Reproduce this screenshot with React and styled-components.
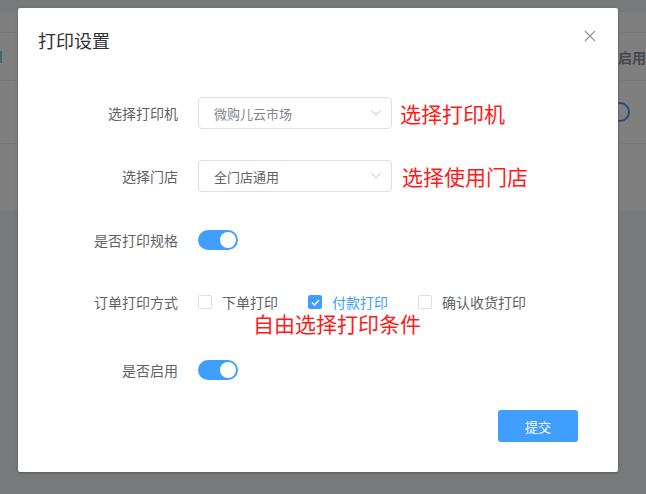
import React from 'react';
import styled, { createGlobalStyle } from 'styled-components';

const GlobalStyle = createGlobalStyle`
  html, body {
    margin: 0;
    padding: 0;
    width: 646px;
    height: 494px;
    overflow: hidden;
    background: #f0f2f5;
    font-family: "Noto Sans CJK SC", "Noto Sans", sans-serif;
  }
  * { box-sizing: border-box; }
`;

const Page = styled.div`
  position: relative;
  width: 646px;
  height: 494px;
  padding-top: 12px;
  overflow: hidden;
`;

const TableCard = styled.div`
  background: #fff;
  height: 198px;
`;

const TableRow = styled.div`
  display: flex;
  align-items: center;
  justify-content: space-between;
  height: ${p => p.h}px;
  border-bottom: 1px solid #ebeef5;
`;

const Mark = styled.span`
  width: 2px;
  height: 12px;
  background: #7fd4d0;
`;

const HeadCell = styled.span`
  font-size: 14px;
  font-weight: 700;
  color: #909399;
  white-space: nowrap;
`;

const Ring = styled.span`
  width: 20px;
  height: 20px;
  border: 2px solid #409eff;
  border-radius: 50%;
  margin-right: 16px;
`;

const Overlay = styled.div`
  position: absolute;
  inset: 0;
  background: rgba(0, 0, 0, 0.5);
  padding: 8px 0 0 18px;
`;

const Dialog = styled.div`
  width: 600px;
  height: 464px;
  background: #fff;
  border-radius: 2px;
  box-shadow: 0 1px 3px rgba(0, 0, 0, 0.3);
  display: flex;
  flex-direction: column;
`;

const DialogHeader = styled.div`
  display: flex;
  align-items: center;
  justify-content: space-between;
  padding: 20px 20px 10px;
`;

const Title = styled.span`
  font-size: 18px;
  line-height: 24px;
  color: #303133;
`;

const Close = styled.span`
  display: flex;
  margin-top: -8px;
  margin-right: 2px;
`;

const Body = styled.div`
  padding: 35px 20px 0;
  flex: 1;
`;

const Item = styled.div`
  display: flex;
  align-items: flex-start;
  margin-top: ${p => p.gap || 0}px;
`;

const Label = styled.label`
  width: 160px;
  flex: none;
  padding-right: 20px;
  text-align: right;
  font-size: 14px;
  line-height: 32px;
  color: #606266;
`;

const Control = styled.div`
  display: flex;
  flex-direction: column;
`;

const Line = styled.div`
  display: flex;
  align-items: center;
  height: 32px;
`;

const Select = styled.div`
  width: 194px;
  height: 32px;
  border: 1px solid #dcdfe6;
  border-radius: 4px;
  display: flex;
  align-items: center;
  justify-content: space-between;
  padding: 0 10px 0 15px;
  font-size: 13px;
  color: ${p => p.muted ? '#83868c' : '#606266'};
`;

const Note = styled.span`
  font-size: 21px;
  line-height: 21px;
  color: #ff1a1a;
  margin-left: ${p => p.offset}px;
  margin-top: ${p => p.lift ? -5 : 0}px;
  white-space: nowrap;
`;

const Toggle = styled.span`
  width: 40px;
  height: 20px;
  border-radius: 10px;
  background: #409eff;
  display: flex;
  align-items: center;
  justify-content: flex-end;
  padding-right: 2px;
  &::after {
    content: '';
    width: 16px;
    height: 16px;
    border-radius: 50%;
    background: #fff;
  }
`;

const Check = styled.label`
  display: flex;
  align-items: center;
  margin-right: 30px;
  font-size: 14px;
  line-height: 20px;
  color: ${p => p.on ? '#409eff' : '#606266'};
`;

const Box = styled.span`
  width: 14px;
  height: 14px;
  border: 1px solid ${p => p.on ? '#409eff' : '#dcdfe6'};
  background: ${p => p.on ? '#409eff' : '#fff'};
  border-radius: 2px;
  margin-right: 10px;
  display: flex;
  align-items: center;
  justify-content: center;
`;

const Footer = styled.div`
  display: flex;
  justify-content: flex-end;
  padding: 0 40px 30px;
`;

const Button = styled.button`
  width: 80px;
  height: 32px;
  border: none;
  border-radius: 3px;
  background: #409eff;
  color: #fff;
  font-family: inherit;
  font-size: 13px;
`;

const Arrow = () => (
  <svg width="10" height="6" viewBox="0 0 10 6">
    <path d="M0.5 0.5 L5 5 L9.5 0.5" fill="none" stroke="#c0c4cc" strokeWidth="1" />
  </svg>
);

const Tick = () => (
  <svg width="9" height="7" viewBox="0 0 9 7">
    <path d="M1 3.5 L3.5 6 L8 1" fill="none" stroke="#fff" strokeWidth="1.3" />
  </svg>
);

const CheckItem = ({ on, children }) => (
  <Check on={on}>
    <Box on={on}>{on && <Tick />}</Box>
    {children}
  </Check>
);

export default function App() {
  return (
    <>
      <GlobalStyle />
      <Page>
        <TableCard>
          <TableRow h={21} />
          <TableRow h={48}>
            <Mark />
            <HeadCell>启用</HeadCell>
          </TableRow>
          <TableRow h={63}>
            <span />
            <Ring />
          </TableRow>
        </TableCard>
        <Overlay>
          <Dialog>
            <DialogHeader>
              <Title>打印设置</Title>
              <Close>
                <svg width="12" height="12" viewBox="0 0 12 12">
                  <path d="M1 1 L11 11 M11 1 L1 11" stroke="#909399" strokeWidth="1.1" />
                </svg>
              </Close>
            </DialogHeader>
            <Body>
              <Item>
                <Label>选择打印机</Label>
                <Line>
                  <Select muted>微购儿云市场<Arrow /></Select>
                  <Note offset={8}>选择打印机</Note>
                </Line>
              </Item>
              <Item gap={31}>
                <Label>选择门店</Label>
                <Line>
                  <Select>全门店通用<Arrow /></Select>
                  <Note offset={10}>选择使用门店</Note>
                </Line>
              </Item>
              <Item gap={32}>
                <Label>是否打印规格</Label>
                <Line><Toggle /></Line>
              </Item>
              <Item gap={30}>
                <Label>订单打印方式</Label>
                <Control>
                  <Line>
                    <CheckItem>下单打印</CheckItem>
                    <CheckItem on>付款打印</CheckItem>
                    <CheckItem>确认收货打印</CheckItem>
                  </Line>
                  <Note offset={55} lift>自由选择打印条件</Note>
                </Control>
              </Item>
              <Item gap={20}>
                <Label>是否启用</Label>
                <Line><Toggle /></Line>
              </Item>
            </Body>
            <Footer>
              <Button>提交</Button>
            </Footer>
          </Dialog>
        </Overlay>
      </Page>
    </>
  );
}
